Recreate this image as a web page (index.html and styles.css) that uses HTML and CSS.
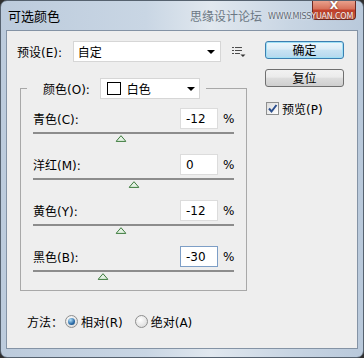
FILE: index.html
```html
<!DOCTYPE html>
<html lang="zh">
<head>
    <meta charset="UTF-8">
    <meta name="viewport" content="width=device-width, initial-scale=1.0">
    <title>可选颜色</title>
    <link rel="stylesheet" href="styles.css">
</head>
<body>

<div class="window">
    <!-- Barra del titolo -->
    <div class="titlebar">
        <span class="title">可选颜色</span>
        <div class="watermark">思缘设计论坛<span class="site">WWW.MISS<span class="site-light">YUAN.COM</span></span></div>
        <div class="close-btn">X</div>
    </div>

    <div class="client">
        <div class="left-col">
            <div class="preset-row">
                <label class="preset-label">预设(E):</label>
                <div class="dropdown preset-select"><span>自定</span><i class="arrow"></i></div>
                <svg class="menu-icon" width="14" height="12" viewBox="0 0 14 12">
                    <g fill="#4a4a4a">
                        <rect x="0" y="1" width="2" height="1"/><rect x="3" y="1" width="7" height="1"/>
                        <rect x="0" y="4" width="2" height="1"/><rect x="3" y="4" width="7" height="1"/>
                        <rect x="0" y="7" width="2" height="1"/><rect x="3" y="7" width="5" height="1"/>
                    </g>
                    <path d="M8.5 8.5 H13.5 L11 11 Z" fill="#333"/>
                </svg>
            </div>

            <fieldset class="group">
                <legend>
                    <span class="legend-label">颜色(O):</span>
                    <div class="dropdown color-select"><span class="swatch"></span><span>白色</span><i class="arrow"></i></div>
                </legend>

                <div class="slider">
                    <div class="slider-head"><span class="slider-label">青色(C):</span><span class="num-box">-12</span><span class="pct">%</span></div>
                    <div class="track"><svg class="thumb" style="left:44%" viewBox="0 0 11 7"><path d="M5.5 0.7 L10.4 6.4 H0.6 Z" fill="#e3f1e3" stroke="#3d7a3d"/></svg></div>
                </div>
                <div class="slider">
                    <div class="slider-head"><span class="slider-label">洋红(M):</span><span class="num-box">0</span><span class="pct">%</span></div>
                    <div class="track"><svg class="thumb" style="left:50%" viewBox="0 0 11 7"><path d="M5.5 0.7 L10.4 6.4 H0.6 Z" fill="#e3f1e3" stroke="#3d7a3d"/></svg></div>
                </div>
                <div class="slider">
                    <div class="slider-head"><span class="slider-label">黄色(Y):</span><span class="num-box">-12</span><span class="pct">%</span></div>
                    <div class="track"><svg class="thumb" style="left:44%" viewBox="0 0 11 7"><path d="M5.5 0.7 L10.4 6.4 H0.6 Z" fill="#e3f1e3" stroke="#3d7a3d"/></svg></div>
                </div>
                <div class="slider">
                    <div class="slider-head"><span class="slider-label">黑色(B):</span><span class="num-box focused">-30</span><span class="pct">%</span></div>
                    <div class="track"><svg class="thumb" style="left:35%" viewBox="0 0 11 7"><path d="M5.5 0.7 L10.4 6.4 H0.6 Z" fill="#e3f1e3" stroke="#3d7a3d"/></svg></div>
                </div>
            </fieldset>

            <div class="method-row">
                <span class="method-label">方法：</span>
                <span class="radio checked"></span><span class="radio-text">相对(R)</span>
                <span class="radio second"></span><span class="radio-text">绝对(A)</span>
            </div>
        </div>

        <div class="right-col">
            <button class="btn btn-default">确定</button>
            <button class="btn">复位</button>
            <div class="preview">
                <span class="checkbox"><svg width="11" height="11" viewBox="0 0 11 11"><path d="M2 5.5 L4.5 8.5 L9.5 2" fill="none" stroke="#2c4f8e" stroke-width="2"/></svg></span>
                <span>预览(P)</span>
            </div>
        </div>
    </div>
</div>

</body>
</html>
```

FILE: styles.css
```css
body {
    margin: 0;
    background-color: #2f2f2f;
    font-family: "DejaVu Sans", "Noto Sans CJK SC", sans-serif;
    font-size: 12px;
    color: #000;
}
.window {
    width: 364px;
    height: 358px;
    box-sizing: border-box;
    border: 1px solid #56626f;
    border-radius: 7px;
    padding: 0 5px 8px;
    background: linear-gradient(90deg, #bccbdc 0%, #c9d6e4 40%, #e1e8ef 58%, #c8d5e3 80%, #b9c9db 100%);
    display: flex;
    flex-direction: column;
    overflow: hidden;
}
.titlebar {
    height: 29px;
    display: flex;
    align-items: center;
    position: relative;
    flex-shrink: 0;
}
.title {
    margin-left: 2px;
    font-family: "Noto Sans CJK SC", sans-serif;
    font-size: 13px;
}
.watermark {
    position: absolute;
    left: 184px;
    top: 6px;
    display: flex;
    align-items: flex-end;
    white-space: nowrap;
    color: #6c7884;
    font-family: "Noto Sans CJK SC", sans-serif;
    font-size: 12px;
    z-index: 2;
}
.site {
    margin: 0 0 3px 6px;
    font-family: "DejaVu Sans", sans-serif;
    font-size: 8px;
    line-height: 8px;
    letter-spacing: -0.2px;
    color: #5e6872;
    text-shadow: 0 0 2px #fff;
}
.site-light {
    color: #fbefec;
    text-shadow: 0 0 2px #5a1a12;
}
.close-btn {
    position: absolute;
    right: 2px;
    top: -1px;
    width: 44px;
    height: 20px;
    box-sizing: border-box;
    border: 1px solid #6e2a22;
    border-top: none;
    border-radius: 0 0 4px 4px;
    background: linear-gradient(#eba692 0%, #d8745d 45%, #c4412b 55%, #d06a50 100%);
    color: #fff;
    font-weight: bold;
    font-size: 11px;
    text-align: center;
    line-height: 12px;
    text-shadow: 0 0 2px #4a1a14;
}
.client {
    flex: 1;
    background-color: #eeeeee;
    border: 1px solid #8493a5;
    display: flex;
    padding: 10px 0 0 10px;
}
.left-col {
    width: 229px;
}
.preset-row {
    display: flex;
    align-items: center;
    height: 21px;
}
.preset-label {
    width: 56px;
}
.dropdown {
    background-color: #fff;
    border: 1px solid #d6d6d6;
    height: 21px;
    box-sizing: border-box;
    display: flex;
    align-items: center;
    padding-left: 4px;
}
.preset-select {
    width: 149px;
}
.arrow {
    margin-left: auto;
    margin-right: 5px;
    width: 0;
    height: 0;
    border-left: 4px solid transparent;
    border-right: 4px solid transparent;
    border-top: 4px solid #000;
}
.menu-icon {
    margin-left: 11px;
}
.group {
    width: 227px;
    box-sizing: border-box;
    margin: 16px 0 0 3px;
    padding: 9px 12px 18px 12px;
    border: 1px solid #a8a8a8;
}
.group legend {
    display: flex;
    align-items: center;
    margin-left: -6px;
    padding: 0 6px 0 16px;
}
.legend-label {
    margin-right: 10px;
}
.color-select {
    width: 100px;
    padding-left: 6px;
}
.color-select .arrow {
    margin-right: 4px;
}
.swatch {
    width: 14px;
    height: 13px;
    box-sizing: border-box;
    border: 1px solid #000;
    background-color: #fff;
    margin-right: 6px;
}
.slider {
    margin-bottom: 20px;
}
.slider:last-child {
    margin-bottom: 0;
}
.slider-head {
    display: flex;
    align-items: center;
    height: 21px;
}
.slider-label {
    flex: 1;
}
.num-box {
    width: 38px;
    height: 21px;
    box-sizing: border-box;
    background-color: #fff;
    border: 1px solid #dcdcdc;
    padding-left: 5px;
    display: flex;
    align-items: center;
}
.num-box.focused {
    border-color: #7d9ec6;
}
.pct {
    margin-left: 5px;
    width: 11px;
}
.track {
    height: 2px;
    margin-top: 3px;
    background-color: #8c8c8c;
    position: relative;
}
.thumb {
    position: absolute;
    top: 3px;
    width: 11px;
    height: 7px;
    transform: translateX(-50%);
}
.method-row {
    display: flex;
    align-items: center;
    height: 16px;
    margin: 22px 0 0 10px;
}
.method-label {
    width: 38px;
    font-family: "Noto Sans CJK SC", sans-serif;
}
.radio {
    width: 13px;
    height: 13px;
    box-sizing: border-box;
    border-radius: 50%;
    border: 1px solid #8e8f8f;
    background: radial-gradient(circle at 40% 35%, #ffffff, #d4d4d4);
    display: flex;
    align-items: center;
    justify-content: center;
    margin-right: 3px;
}
.radio.checked::after {
    content: "";
    width: 7px;
    height: 7px;
    border-radius: 50%;
    background: radial-gradient(circle at 35% 30%, #b4e2fa, #2a6aa6 60%, #17456f);
}
.radio.second {
    margin-left: 12px;
}
.right-col {
    margin-left: 19px;
    width: 79px;
    display: flex;
    flex-direction: column;
}
.btn {
    display: block;
    width: 79px;
    height: 18px;
    box-sizing: border-box;
    border: 1px solid #707070;
    border-radius: 3px;
    background: linear-gradient(#f2f2f2 0%, #ebebeb 45%, #dddddd 50%, #cfcfcf 100%);
    font-family: "Noto Sans CJK SC", sans-serif;
    font-size: 12px;
    color: #000;
    padding: 0;
    line-height: 16px;
    margin-bottom: 10px;
}
.btn-default {
    border-color: #3c7fb1;
    background: linear-gradient(#eef7fc 0%, #dcedf7 45%, #c9e3f3 50%, #b5d8ee 100%);
    box-shadow: inset 0 0 0 1px #9fe0f5;
}
.preview {
    display: flex;
    align-items: center;
    margin-top: 3px;
    margin-left: 1px;
}
.checkbox {
    width: 13px;
    height: 13px;
    box-sizing: border-box;
    border: 1px solid #8e8f8f;
    background: linear-gradient(135deg, #dcdcdc, #ffffff);
    display: flex;
    align-items: center;
    justify-content: center;
    margin-right: 3px;
}
```
